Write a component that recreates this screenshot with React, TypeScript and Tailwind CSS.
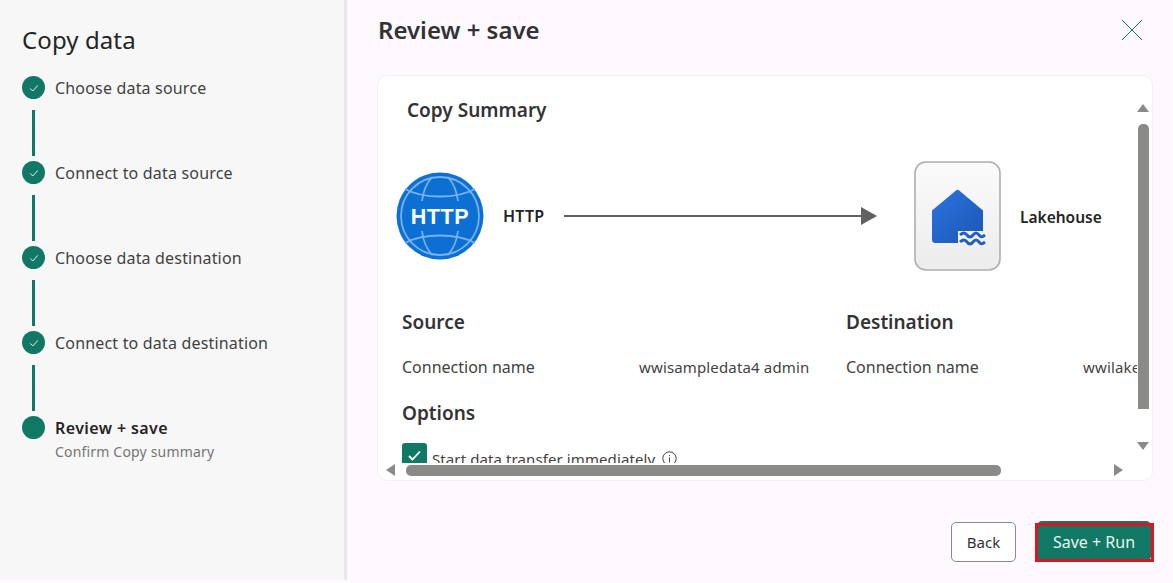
const steps = [
  { label: "Choose data source", done: true },
  { label: "Connect to data source", done: true },
  { label: "Choose data destination", done: true },
  { label: "Connect to data destination", done: true },
];

function StepDot({ done }: { done: boolean }) {
  return (
    <span className="flex h-[23px] w-[23px] shrink-0 items-center justify-center rounded-full bg-[#117865]">
      {done && (
        <svg width="12" height="12" viewBox="0 0 12 12" fill="none">
          <path d="M2.2 6.4 4.800 9 9.800 3.400" stroke="#e4f1ee" strokeWidth="1" />
        </svg>
      )}
    </span>
  );
}

function Sidebar() {
  return (
    <aside className="h-[580px] w-[347px] shrink-0 border-r-[3px] border-[#e9e6e9] bg-[#f7f7f7] pl-[22px] pt-[24px]">
      <h1 className="text-[24px] leading-[32px] tracking-[0.1px] text-[#242424]">Copy data</h1>
      <ol className="mt-[20px]">
        {steps.map((step) => (
          <li key={step.label}>
            <div className="flex h-[23px] items-center gap-[10px]">
              <StepDot done={step.done} />
              <span className="text-[16px] tracking-[0.18px] text-[#424242]">{step.label}</span>
            </div>
            <div className="ml-[10px] mt-[11px] mb-[5px] h-[46px] w-[3px] bg-[#117865]" />
          </li>
        ))}
        <li>
          <div className="flex h-[23px] items-center gap-[10px]">
            <StepDot done={false} />
            <span className="text-[16px] font-semibold tracking-[0.4px] text-[#242424]">Review + save</span>
          </div>
          <p className="ml-[33px] mt-[3px] text-[14px] leading-[20px] tracking-[0.18px] text-[#757575]">Confirm Copy summary</p>
        </li>
      </ol>
    </aside>
  );
}

function HttpIcon() {
  return (
    <svg width="88" height="88" viewBox="0 0 88 88" className="shrink-0">
      <circle cx="44" cy="44" r="43.5" fill="#0b6fd3" />
      <g fill="none" stroke="#78b2ee" strokeWidth="1.8">
        <circle cx="44" cy="44" r="39" />
        <path d="M9 17c18 10 52 10 70 0" />
        <path d="M9 71c18-10 52-10 70 0" />
        <path d="M36 5C30 12 27 20 26 29" />
        <path d="M52 5c6 7 9 15 10 24" />
        <path d="M36 83C30 76 27 68 26 59" />
        <path d="M52 83c6-7 9-15 10-24" />
      </g>
      <text x="44" y="52" textAnchor="middle" fontSize="21.5" fontWeight="700" letterSpacing="0.6" fill="#ffffff" fontFamily="'Liberation Sans', sans-serif">HTTP</text>
    </svg>
  );
}

function LakehouseIcon() {
  return (
    <svg width="87" height="110" viewBox="0 0 87 110" className="shrink-0">
      <defs>
        <linearGradient id="tile" x1="0" y1="0" x2="0" y2="1">
          <stop offset="0" stopColor="#fbfbfb" />
          <stop offset="1" stopColor="#ececec" />
        </linearGradient>
        <linearGradient id="house" x1="0" y1="0" x2="1" y2="1">
          <stop offset="0" stopColor="#2b74e0" />
          <stop offset="1" stopColor="#1c56b4" />
        </linearGradient>
      </defs>
      <rect x="1" y="1" width="85" height="108" rx="11" fill="url(#tile)" stroke="#aeaeae" strokeWidth="1.6" />
      <path d="M42 29.500a2.500 2.500 0 0 1 3.200 0L69 49.500V70H44v12H20.500a3 3 0 0 1-2.500-3V49.500z" fill="url(#house)" />
      <g fill="none" stroke="#1f5fc0" strokeWidth="2.900">
        <path d="M46 74c3-2.600 5-2.600 7 0s4 2.600 6 0 4-2.600 6 0 3 2.400 6 0" />
        <path d="M46 81c3-2.600 5-2.600 7 0s4 2.600 6 0 4-2.600 6 0 3 2.400 6 0" />
      </g>
    </svg>
  );
}

function SummaryColumn({ title, value }: { title: string; value: string }) {
  return (
    <div className="w-[444px] shrink-0">
      <h3 className="text-[19px] font-semibold leading-[26px] text-[#333333]">{title}</h3>
      <div className="mt-[22px] flex leading-[20px] text-[#424242]">
        <span className="w-[237px] shrink-0 text-[16px]">Connection name</span>
        <span className="whitespace-nowrap text-[15px] tracking-[0.15px]">{value}</span>
      </div>
    </div>
  );
}

function CopySummary() {
  return (
    <section className="relative mt-[29px] h-[406px] overflow-hidden rounded-[10px] border border-[#f3eff4] bg-white">
      <div className="h-[387px] w-[759px] overflow-hidden">
        <h2 className="ml-[29px] mt-[21px] text-[19px] font-semibold leading-[26px] text-[#333333]">Copy Summary</h2>
        <div className="ml-[18px] mt-[38px] flex items-center">
          <HttpIcon />
          <span className="ml-[19px] w-[61px] text-[16px] font-semibold tracking-[0.2px] text-[#242424]">HTTP</span>
          <div className="h-[2px] w-[297px] bg-[#616161]" />
          <div className="h-0 w-0 border-y-[9px] border-l-[16px] border-y-transparent border-l-[#616161]" />
          <div className="ml-[37px]">
            <LakehouseIcon />
          </div>
          <span className="ml-[19px] mt-[3px] text-[15.500px] font-semibold text-[#242424]">Lakehouse</span>
        </div>
        <div className="ml-[24px] mt-[38px] flex">
          <SummaryColumn title="Source" value="wwisampledata4 admin" />
          <SummaryColumn title="Destination" value="wwilakehouse" />
        </div>
        <h3 className="ml-[24px] mt-[23px] text-[19px] font-semibold leading-[26px] text-[#333333]">Options</h3>
        <label className="ml-[24px] mt-[15px] flex items-center gap-[5px] text-[15px] leading-[20px] tracking-[0.1px] text-[#424242]">
          <span className="flex h-[25px] w-[25px] items-center justify-center rounded-[3px] bg-[#117865]">
            <svg width="15" height="15" viewBox="0 0 15 15" fill="none">
              <path d="M2 8l3.500 3.500L13 3.500" stroke="#ffffff" strokeWidth="1.800" />
            </svg>
          </span>
          <span className="mt-[8px]">Start data transfer immediately</span>
          <svg width="15" height="15" viewBox="0 0 15 15" fill="none" className="mt-[6px] ml-[2px]">
            <circle cx="7.500" cy="7.500" r="6.700" stroke="#424242" />
            <path d="M7.500 6.500v5M7.500 4v1.200" stroke="#424242" />
          </svg>
        </label>
      </div>
      <ScrollBars />
    </section>
  );
}

function ScrollBars() {
  return (
    <>
      <div className="absolute left-[759px] top-[28px] flex h-[350px] w-[12px] flex-col items-center">
        <div className="h-0 w-0 border-x-[6px] border-b-[8px] border-x-transparent border-b-[#8a8b89]" />
        <div className="mt-[12px] h-[285px] w-[11px] rounded-t-[5px] bg-[#8a8b89]" />
        <div className="mt-[33px] h-0 w-0 border-x-[6px] border-t-[8px] border-x-transparent border-t-[#8a8b89]" />
      </div>
      <div className="absolute left-[8px] top-[388px] flex h-[12px] w-[740px] items-center">
        <div className="h-0 w-0 border-y-[6px] border-r-[9px] border-y-transparent border-r-[#8a8b89]" />
        <div className="ml-[11px] h-[11px] w-[595px] rounded-[5px] bg-[#8a8b89]" />
        <div className="ml-[113px] h-0 w-0 border-y-[6px] border-l-[9px] border-y-transparent border-l-[#8a8b89]" />
      </div>
    </>
  );
}

export default function App() {
  return (
    <div className="flex h-[583px] w-[1173px] overflow-hidden bg-[#fdf9fe] font-['Noto_Sans',sans-serif]">
      <Sidebar />
      <main className="flex-1 pl-[30px] pr-[20px] pt-[14px]">
        <header className="flex items-center justify-between">
          <h2 className="ml-[1px] text-[24px] font-semibold leading-[32px] text-[#333333]">Review + save</h2>
          <svg width="22" height="22" viewBox="0 0 22 22" fill="none" stroke="#117865" strokeWidth="1" className="mr-[10px]">
            <path d="M1 1l20 20M21 1L1 21" />
          </svg>
        </header>
        <CopySummary />
        <footer className="mt-[40px] flex items-start justify-end gap-[21px]">
          <button className="mt-[1px] h-[40px] w-[65px] rounded-[5px] border border-[#8a8a8a] bg-white text-[15px] text-[#333333]">Back</button>
          <button className="relative mr-[2px] h-[40px] w-[114px] rounded-[5px] bg-[#117865] pt-[2px] text-[16px] text-[#e8f3f0]">
            Save + Run
            <span className="absolute bottom-[-1px] left-[-2px] right-[-3px] top-[2px] border-[3px] border-[#e0141e]" />
          </button>
        </footer>
      </main>
    </div>
  );
}
